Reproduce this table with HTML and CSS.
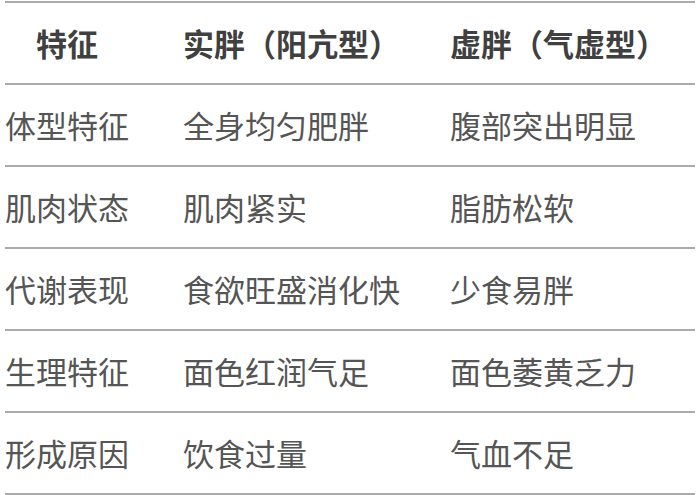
FILE: index.html
```html
<!DOCTYPE html>
<html lang="zh-CN">
<head>
<meta charset="utf-8">
<link rel="stylesheet" href="styles.css">
</head>
<body>
<table class="compare">
  <colgroup>
    <col class="c1">
    <col class="c2">
    <col class="c3">
  </colgroup>
  <thead>
    <tr><th>特征</th><th>实胖（阳亢型）</th><th>虚胖（气虚型）</th></tr>
  </thead>
  <tbody>
    <tr><td>体型特征</td><td>全身均匀肥胖</td><td>腹部突出明显</td></tr>
    <tr><td>肌肉状态</td><td>肌肉紧实</td><td>脂肪松软</td></tr>
    <tr><td>代谢表现</td><td>食欲旺盛消化快</td><td>少食易胖</td></tr>
    <tr><td>生理特征</td><td>面色红润气足</td><td>面色萎黄乏力</td></tr>
    <tr><td>形成原因</td><td>饮食过量</td><td>气血不足</td></tr>
  </tbody>
</table>
</body>
</html>
```

FILE: styles.css
```css
html, body {
  margin: 0;
  padding: 0;
  background: #ffffff;
}
body {
  padding: 1px 5px 0 5px;
  font-family: "Noto Sans CJK SC", "Noto Sans", sans-serif;
}
.compare {
  width: 690px;
  border-collapse: collapse;
  table-layout: fixed;
  font-size: 31px;
  color: #555555;
}
.c1 { width: 178px; }
.c2 { width: 267px; }
.c3 { width: 245px; }
.compare th,
.compare td {
  height: 80px;
  padding: 0;
  border-top: 2px solid #ababab;
  border-bottom: 2px solid #ababab;
  vertical-align: middle;
  white-space: nowrap;
  line-height: 1.2;
}
.compare th:nth-child(1),
.compare td:nth-child(1) { padding-right: 54px; }
.compare th:nth-child(2),
.compare td:nth-child(2) { padding-right: 50px; }
.compare th:nth-child(3),
.compare td:nth-child(3) { padding-right: 28px; }
.compare th {
  font-weight: 700;
  color: #404040;
  text-align: center;
}
.compare td {
  text-align: left;
  font-weight: 400;
}
```
